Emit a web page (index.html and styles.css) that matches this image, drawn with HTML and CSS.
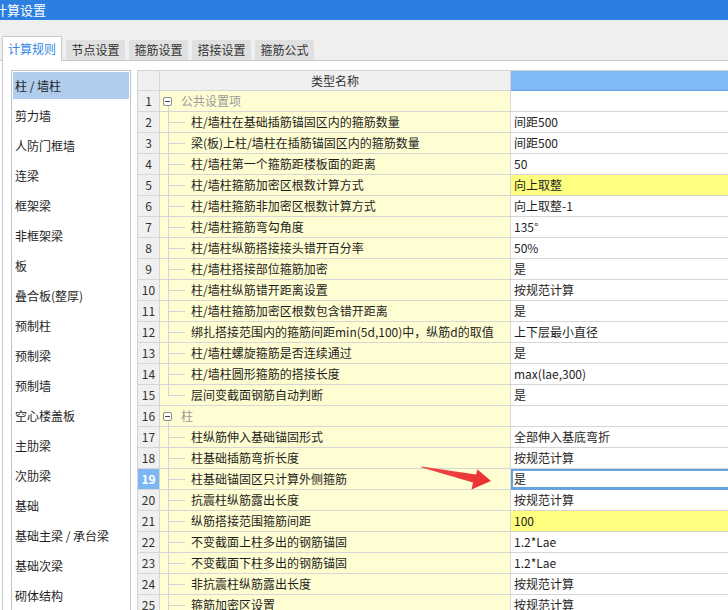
FILE: index.html
```html
<!DOCTYPE html>
<html lang="zh-CN">
<head>
<meta charset="utf-8">
<title>计算设置</title>
<link rel="stylesheet" href="styles.css">
</head>
<body>
<div class="titlebar"><span class="title">计算设置</span></div>
<div class="tabstrip">
  <div class="tab active">计算规则</div>
  <div class="tab">节点设置</div>
  <div class="tab">箍筋设置</div>
  <div class="tab">搭接设置</div>
  <div class="tab">箍筋公式</div>
</div>
<div class="panel">
  <div class="sidebar">
    <div class="item active">柱 / 墙柱</div>
    <div class="item">剪力墙</div>
    <div class="item">人防门框墙</div>
    <div class="item">连梁</div>
    <div class="item">框架梁</div>
    <div class="item">非框架梁</div>
    <div class="item">板</div>
    <div class="item">叠合板(整厚)</div>
    <div class="item">预制柱</div>
    <div class="item">预制梁</div>
    <div class="item">预制墙</div>
    <div class="item">空心楼盖板</div>
    <div class="item">主肋梁</div>
    <div class="item">次肋梁</div>
    <div class="item">基础</div>
    <div class="item">基础主梁 / 承台梁</div>
    <div class="item">基础次梁</div>
    <div class="item">砌体结构</div>
  </div>
  <div class="grid">
    <div class="cell head num"></div>
    <div class="cell head name-h">类型名称</div>
    <div class="cell head val-h"></div>

    <div class="cell num">1</div>
    <div class="cell name group"><span class="toggle"></span>公共设置项</div>
    <div class="cell val"></div>

    <div class="cell num">2</div>
    <div class="cell name child">柱/墙柱在基础插筋锚固区内的箍筋数量</div>
    <div class="cell val">间距500</div>

    <div class="cell num">3</div>
    <div class="cell name child">梁(板)上柱/墙柱在插筋锚固区内的箍筋数量</div>
    <div class="cell val">间距500</div>

    <div class="cell num">4</div>
    <div class="cell name child">柱/墙柱第一个箍筋距楼板面的距离</div>
    <div class="cell val">50</div>

    <div class="cell num">5</div>
    <div class="cell name child">柱/墙柱箍筋加密区根数计算方式</div>
    <div class="cell val hl">向上取整</div>

    <div class="cell num">6</div>
    <div class="cell name child">柱/墙柱箍筋非加密区根数计算方式</div>
    <div class="cell val">向上取整-1</div>

    <div class="cell num">7</div>
    <div class="cell name child">柱/墙柱箍筋弯勾角度</div>
    <div class="cell val">135°</div>

    <div class="cell num">8</div>
    <div class="cell name child">柱/墙柱纵筋搭接接头错开百分率</div>
    <div class="cell val">50%</div>

    <div class="cell num">9</div>
    <div class="cell name child">柱/墙柱搭接部位箍筋加密</div>
    <div class="cell val">是</div>

    <div class="cell num">10</div>
    <div class="cell name child">柱/墙柱纵筋错开距离设置</div>
    <div class="cell val">按规范计算</div>

    <div class="cell num">11</div>
    <div class="cell name child">柱/墙柱箍筋加密区根数包含错开距离</div>
    <div class="cell val">是</div>

    <div class="cell num">12</div>
    <div class="cell name child">绑扎搭接范围内的箍筋间距min(5d,100)中，纵筋d的取值</div>
    <div class="cell val">上下层最小直径</div>

    <div class="cell num">13</div>
    <div class="cell name child">柱/墙柱螺旋箍筋是否连续通过</div>
    <div class="cell val">是</div>

    <div class="cell num">14</div>
    <div class="cell name child">柱/墙柱圆形箍筋的搭接长度</div>
    <div class="cell val">max(lae,300)</div>

    <div class="cell num">15</div>
    <div class="cell name child last">层间变截面钢筋自动判断</div>
    <div class="cell val">是</div>

    <div class="cell num">16</div>
    <div class="cell name group"><span class="toggle"></span>柱</div>
    <div class="cell val"></div>

    <div class="cell num">17</div>
    <div class="cell name child">柱纵筋伸入基础锚固形式</div>
    <div class="cell val">全部伸入基底弯折</div>

    <div class="cell num">18</div>
    <div class="cell name child">柱基础插筋弯折长度</div>
    <div class="cell val">按规范计算</div>

    <div class="cell num selected">19</div>
    <div class="cell name child">柱基础锚固区只计算外侧箍筋</div>
    <div class="cell val editing">是</div>

    <div class="cell num">20</div>
    <div class="cell name child">抗震柱纵筋露出长度</div>
    <div class="cell val">按规范计算</div>

    <div class="cell num">21</div>
    <div class="cell name child">纵筋搭接范围箍筋间距</div>
    <div class="cell val hl">100</div>

    <div class="cell num">22</div>
    <div class="cell name child">不变截面上柱多出的钢筋锚固</div>
    <div class="cell val">1.2*Lae</div>

    <div class="cell num">23</div>
    <div class="cell name child">不变截面下柱多出的钢筋锚固</div>
    <div class="cell val">1.2*Lae</div>

    <div class="cell num">24</div>
    <div class="cell name child">非抗震柱纵筋露出长度</div>
    <div class="cell val">按规范计算</div>

    <div class="cell num">25</div>
    <div class="cell name child">箍筋加密区设置</div>
    <div class="cell val">按规范计算</div>

    <div class="cell num">26</div>
    <div class="cell name child">箍筋设置</div>
    <div class="cell val">按规范计算</div>
  </div>
</div>
<svg class="arrow" width="728" height="610" viewBox="0 0 728 610" aria-hidden="true">
  <defs>
    <linearGradient id="ag" x1="0" y1="0" x2="1" y2="0">
      <stop offset="0" stop-color="#f04848"/>
      <stop offset="1" stop-color="#ea3030"/>
    </linearGradient>
  </defs>
  <polygon points="421.5,466.5 476,474.5 477.5,469.5 491,481 471.5,489.5 473,482.5 421.5,467.5" fill="url(#ag)"/>
</svg>
</body>
</html>
```

FILE: styles.css
```css
html, body {
  margin: 0;
  padding: 0;
}
body {
  width: 728px;
  height: 610px;
  overflow: hidden;
  position: relative;
  background: #ffffff;
  font-family: "Noto Sans CJK SC", "Noto Sans", sans-serif;
  font-size: 12px;
  color: #1e1e1e;
}

.titlebar {
  height: 20px;
  background: #2c7fe0;
  color: #ffffff;
  font-size: 13px;
  line-height: 20px;
  overflow: hidden;
  white-space: nowrap;
}
.title {
  display: inline-block;
  margin-left: -6px;
}

.tabstrip {
  height: 40px;
  background: #efefef;
  border-bottom: 1px solid #c8c8c8;
  display: flex;
  align-items: flex-end;
  padding-left: 2px;
  gap: 4px;
}
.tab {
  width: 59px;
  height: 20px;
  box-sizing: border-box;
  background: #e0e0e0;
  color: #333333;
  text-align: center;
  line-height: 20px;
  font-size: 12px;
  border-radius: 2px 2px 0 0;
}
.tab.active {
  width: 60px;
  height: 25px;
  margin-bottom: -1px;
  background: #ffffff;
  color: #2f86e6;
  border: 1px solid #c8c8c8;
  border-bottom: none;
  line-height: 24px;
}

.panel {
  margin-left: 2px;
  border-left: 1px solid #c8c8c8;
  height: 560px;
  display: flex;
  align-items: flex-start;
  padding: 9px 0 0 8px;
}

.sidebar {
  flex: none;
  width: 120px;
  height: 560px;
  box-sizing: border-box;
  border: 1px solid #c4c4c4;
  padding: 1px;
}
.item {
  height: 27px;
  line-height: 27px;
  padding-left: 2px;
  margin-bottom: 3px;
  white-space: nowrap;
  color: #1e1e1e;
}
.item.active {
  background: #b1cdee;
}

.grid {
  flex: none;
  margin-left: 6px;
  width: 640px;
  display: grid;
  grid-template-columns: 22px 351px 266px;
  border-top: 1px solid #d2d2d2;
  border-left: 1px solid #d2d2d2;
}
.cell {
  box-sizing: border-box;
  height: 21px;
  line-height: 20px;
  border-right: 1px solid #d6d6d6;
  border-bottom: 1px solid #d6d6d6;
  white-space: nowrap;
  overflow: hidden;
}
.cell.head {
  height: 20px;
  line-height: 19px;
  background: #f0f0f0;
  color: #333333;
}
.name-h {
  text-align: center;
}
.cell.val-h {
  background: #80b9f6;
  border-bottom-color: #66a6ec;
}

.num {
  background: #f0f0f0;
  text-align: center;
  color: #333333;
}
.num.selected {
  background: #7db7f3;
  color: #ffffff;
  font-weight: bold;
}

.name {
  background: #fffdd2;
  color: #1e1e1e;
}
.name.child {
  padding-left: 31px;
  background:
    linear-gradient(#d4d4d4, #d4d4d4) 8px 0 / 1px 100% no-repeat,
    linear-gradient(#d4d4d4, #d4d4d4) 8px 10px / 17px 1px no-repeat,
    #fffdd2;
}
.name.child.last {
  background:
    linear-gradient(#d4d4d4, #d4d4d4) 8px 0 / 1px 11px no-repeat,
    linear-gradient(#d4d4d4, #d4d4d4) 8px 10px / 17px 1px no-repeat,
    #fffdd2;
}
.name.group {
  color: #9a9a9a;
  padding-left: 3px;
  display: flex;
  align-items: center;
  background:
    linear-gradient(#d4d4d4, #d4d4d4) 8px 15px / 1px 6px no-repeat,
    #fffdd2;
}
.toggle {
  flex: none;
  width: 9px;
  height: 9px;
  box-sizing: border-box;
  border: 1px solid #8c8c8c;
  border-radius: 2px;
  margin-right: 9px;
  background: linear-gradient(#444, #444) center / 5px 1px no-repeat, #ffffff;
}

.val {
  background: #ffffff;
  padding-left: 3px;
  color: #1e1e1e;
}
.val.hl {
  background: #ffff80;
}
.val.editing {
  box-shadow: inset 0 0 0 2px #6aa2e0;
  border-color: #6aa2e0;
}

.arrow {
  position: absolute;
  left: 0;
  top: 0;
  pointer-events: none;
}
```
